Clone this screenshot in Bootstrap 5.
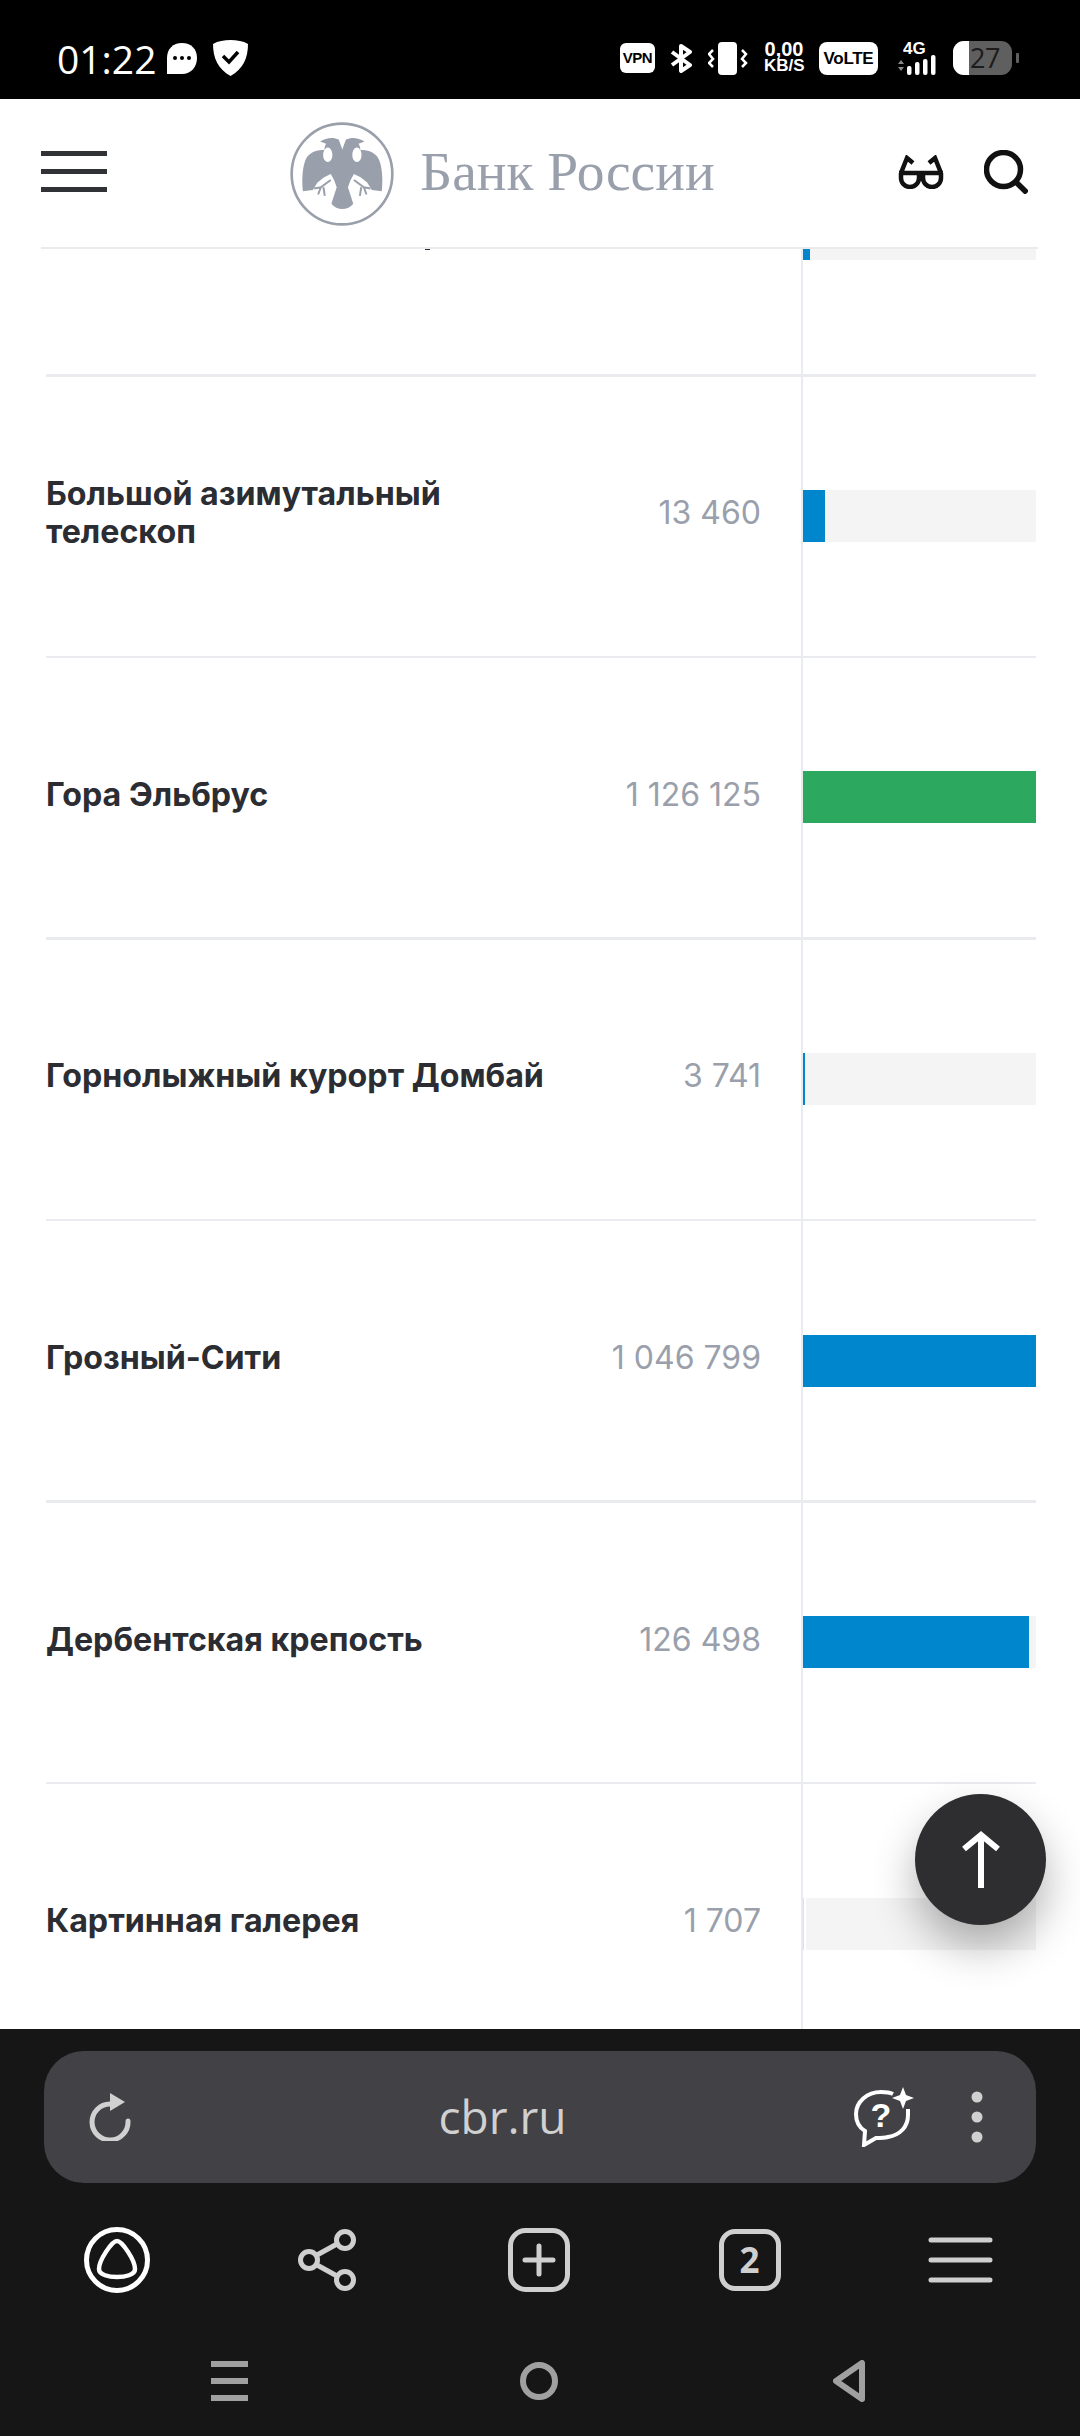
<!DOCTYPE html>
<html lang="ru">
<head>
  <meta charset="UTF-8" />
  <meta name="viewport" content="width=device-width, initial-scale=1.0"/>
  <title>Банк России</title>
  <link href="https://cdn.jsdelivr.net/npm/bootstrap@5.3.2/dist/css/bootstrap.min.css" rel="stylesheet" />
  <style>
    html, body { height: 2436px; overflow: hidden; background: #fff; }
    body { width: 1080px; font-family: Inter, "Liberation Sans", sans-serif; }

    .phone-status { height: 99px; padding: 17px 61px 0 57px; background: #000; color: #fff; }
    .phone-time { font: 400 39px/1 "Open Sans", sans-serif; margin-right: 11px; }
    .phone-icons { gap: 15px; }
    .pill-vpn, .pill-volte { background: #fff; color: #000; font-family: "Liberation Sans", sans-serif; font-weight: 700; border-radius: 6px; text-align: center; }
    .pill-vpn { width: 35px; height: 30px; font-size: 15px; line-height: 30px; letter-spacing: -.5px; }
    .pill-volte { width: 59px; height: 33px; font-size: 17px; line-height: 33px; border-radius: 8px; letter-spacing: -.3px; }
    .net-speed { width: 40px; font: 700 20px/15px "Liberation Sans", sans-serif; text-align: center; white-space: nowrap; }
    .net-speed span { display: block; font-size: 17px; line-height: 18px; }
    .signal-4g { position: relative; width: 41px; height: 33px; margin: 0 2px; }
    .signal-4g b { position: absolute; left: 8px; top: -2px; font: 700 17px/1 "Liberation Sans", sans-serif; }
    .batt { position: relative; width: 59px; height: 34px; border-radius: 11px; background: #5f5f5f; color: #1c1c1c; font: 400 27px/34px "Open Sans", sans-serif; padding-left: 17px; letter-spacing: -.5px; }
    .batt::before { content: ""; position: absolute; left: 0; top: 0; bottom: 0; width: 16px; background: #fff; border-radius: 11px 0 0 11px; }
    .batt-cap { width: 3px; height: 10px; background: #5f5f5f; border-radius: 1px; margin-left: -11px; }

    .page-view { height: 1930px; }
    .site-head { height: 150px; z-index: 5; padding: 0 52px 5px 41px; }
    .site-head::after { content: ""; position: absolute; left: 41px; right: 42px; bottom: 0; height: 2px; background: #e9ebee; }
    .burger-top { width: 66px; }
    .burger-top i { display: block; height: 5px; margin-bottom: 13px; background: #303236; }
    .burger-top i:last-child { margin-bottom: 0; }
    .brand-logo { margin-top: 4px; }
    .brand-name { font: 400 55.5px/1 "Liberation Serif", serif; color: #9aa0ab; margin-left: 26px; white-space: nowrap; }
    .head-tools { gap: 40px; }

    .stat-list { margin: -5.6px 44px 0 46px; }
    .stat-row { height: 281.6px; position: relative; }
    .stat-row::after { content: ""; position: absolute; left: 0; right: 0; bottom: -1.5px; height: 2.5px; background: #e9ebee; }
    .stat-name { width: 650px; padding-bottom: 5px; font-size: 32.2px; line-height: 38px; font-weight: 700; color: #2b2d33; }
    .stat-num { width: 65px; flex-grow: 1; padding-right: 40px; padding-bottom: 5px; font-size: 32px; color: #9aa0ab; white-space: nowrap; }
    .stat-bar { width: 235px; flex: none; border-left: 2px solid #e8ebef; }
    .stat-bar .progress { height: 52px; width: 100%; border-radius: 0; background: #f4f4f4; }
    .bar-blue { background: #0086cd; }
    .bar-green { background: #2ca85f; }
    .bar-faint { background: #cfe6f3; border-right: 2px solid #fff; }
    .peek { position: absolute; left: 379px; top: 155px; width: 5px; height: 2px; background: #2b2d33; }

    .go-top { right: 34px; top: 1695px; width: 131px; height: 131px; z-index: 6; background: #2e2e30; box-shadow: 0 22px 44px rgba(0,0,0,.3); }

    .browser-bar { height: 407px; background: #161616; padding: 22px 44px 0; }
    .url-box { height: 132px; border-radius: 40px; background: #424146; padding: 0 53px 0 45px; }
    .url-text { font: 400 46px/1 "Open Sans", sans-serif; color: #d0d0d0; margin: -3px 0 0 20px; }
    .help-gap { margin-right: 57px; }
    .tool-row { margin: 45px -31px 0 -33px; height: 64px; }
    .tool-cell { width: 211px; }
    .tab-count { width: 62px; height: 62px; border: 5px solid #cfcfcf; border-radius: 16px; color: #cfcfcf; font: 700 35px/52px "Open Sans", sans-serif; text-align: center; }
    .sys-row { margin: 68px 30px 0; height: 42px; }
    .sys-cell { width: 310px; }
  </style>
</head>
<body class="d-flex flex-column">

  <div class="phone-status d-flex justify-content-between align-items-center flex-shrink-0">
    <div class="d-flex align-items-center">
      <span class="phone-time">01:22</span>
      <svg width="30" height="31" viewBox="0 0 30 31" class="me-3"><path d="M15 0C6 0 0 6 0 15V31H15C24 31 30 24 30 15S24 0 15 0Z" fill="#fff"/><circle cx="8" cy="15" r="2" fill="#000"/><circle cx="15" cy="15" r="2" fill="#000"/><circle cx="22" cy="15" r="2" fill="#000"/></svg>
      <svg width="35" height="36" viewBox="0 0 35 36"><path d="M17.500 0C24 0 30 1 35 4C35 18 30 29 17.500 36C5 29 0 18 0 4C5 1 11 0 17.500 0Z" fill="#fff"/><path d="M10 16L16 22L25 12" fill="none" stroke="#000" stroke-width="3.500"/></svg>
    </div>
    <div class="phone-icons d-flex align-items-center">
      <div class="pill-vpn">VPN</div>
      <svg width="23" height="29" viewBox="0 0 23 29"><path d="M2 8L20 21L11 27V2L20 8L2 21" fill="none" stroke="#fff" stroke-width="4" stroke-linejoin="round"/></svg>
      <svg width="41" height="33" viewBox="0 0 41 33"><rect x="10" width="19" height="33" rx="4" fill="#fff"/><path d="M5 8L1 12L5 17L1 21L5 25M34 8L38 12L34 17L38 21L34 25" fill="none" stroke="#fff" stroke-width="2.500"/></svg>
      <div class="net-speed">0,00<span>KB/S</span></div>
      <div class="pill-volte">VoLTE</div>
      <div class="signal-4g">
        <b>4G</b>
        <svg width="41" height="33" viewBox="0 0 41 33"><path d="M3 22L6 18L9 22ZM3 25L6 29L9 25Z" fill="#8a8a8a"/><rect x="12" y="24" width="4.500" height="9" rx="2" fill="#fff"/><rect x="20" y="20" width="4.500" height="13" rx="2" fill="#fff"/><rect x="28" y="17" width="4.500" height="16" rx="2" fill="#fff"/><rect x="36" y="13" width="4.500" height="20" rx="2" fill="#fff"/></svg>
      </div>
      <div class="batt">27</div>
      <div class="batt-cap"></div>
    </div>
  </div>

  <div class="page-view position-relative overflow-hidden flex-shrink-0">
    <header class="site-head position-absolute top-0 start-0 end-0 bg-white d-flex justify-content-between align-items-center">
      <div class="burger-top"><i></i><i></i><i></i></div>
      <div class="d-flex align-items-center">
        <svg class="brand-logo" width="104" height="104" viewBox="67 65 314 314">
          <circle cx="224" cy="222" r="152" fill="none" stroke="#9aa0ab" stroke-width="8"/>
          <g id="eagle-half" fill="#9aa0ab">
            <path d="M226 150L214 118C198 110 176 112 158 124L176 131C166 146 170 170 190 184L188 150C150 146 122 156 112 184C103 212 103 248 106 274L136 270L150 248L170 232L190 222L200 240L208 262L192 312C200 322 212 328 226 328Z"/>
            <path d="M190 240L160 262L140 266M160 262L152 284M168 262L172 288" fill="none" stroke="#9aa0ab" stroke-width="6"/>
          </g>
          <use href="#eagle-half" transform="matrix(-1 0 0 1 450 0)"/>
          <ellipse cx="181" cy="164" rx="14" ry="22" fill="#fff"/>
          <ellipse cx="269" cy="164" rx="14" ry="22" fill="#fff"/>
        </svg>
        <span class="brand-name">Банк России</span>
      </div>
      <div class="head-tools d-flex align-items-center">
        <svg width="46" height="34" viewBox="0 0 46 34" fill="none" stroke="#111" stroke-width="4.500"><path d="M1 18H45M3 18V23a9 9 0 0 0 18 0V18M25 18V23a9 9 0 0 0 18 0V18M3 18L9 3L15 8M43 18L37 3L31 8"/></svg>
        <svg width="44" height="44" viewBox="0 0 44 44" fill="none" stroke="#111" stroke-width="5.500"><circle cx="19.500" cy="19.500" r="17"/><path d="M31 31L43 43"/></svg>
      </div>
    </header>

    <div class="stat-list">
      <div class="stat-row d-flex align-items-stretch">
        <span class="peek"></span>
        <div class="stat-name d-flex align-items-center"></div>
        <div class="stat-num d-flex align-items-center justify-content-end"></div>
        <div class="stat-bar d-flex align-items-center"><div class="progress"><div class="progress-bar bar-blue" style="width:3%"></div></div></div>
      </div>
      <div class="stat-row d-flex align-items-stretch">
        <div class="stat-name d-flex align-items-center"><span>Большой азимутальный<br>телескоп</span></div>
        <div class="stat-num d-flex align-items-center justify-content-end">13 460</div>
        <div class="stat-bar d-flex align-items-center"><div class="progress"><div class="progress-bar bar-blue" style="width:9.500%"></div></div></div>
      </div>
      <div class="stat-row d-flex align-items-stretch">
        <div class="stat-name d-flex align-items-center">Гора Эльбрус</div>
        <div class="stat-num d-flex align-items-center justify-content-end">1 126 125</div>
        <div class="stat-bar d-flex align-items-center"><div class="progress"><div class="progress-bar bar-green" style="width:100%"></div></div></div>
      </div>
      <div class="stat-row d-flex align-items-stretch">
        <div class="stat-name d-flex align-items-center">Горнолыжный курорт Домбай</div>
        <div class="stat-num d-flex align-items-center justify-content-end">3 741</div>
        <div class="stat-bar d-flex align-items-center"><div class="progress"><div class="progress-bar bar-blue" style="width:1%"></div></div></div>
      </div>
      <div class="stat-row d-flex align-items-stretch">
        <div class="stat-name d-flex align-items-center">Грозный-Сити</div>
        <div class="stat-num d-flex align-items-center justify-content-end">1 046 799</div>
        <div class="stat-bar d-flex align-items-center"><div class="progress"><div class="progress-bar bar-blue" style="width:100%"></div></div></div>
      </div>
      <div class="stat-row d-flex align-items-stretch">
        <div class="stat-name d-flex align-items-center">Дербентская крепость</div>
        <div class="stat-num d-flex align-items-center justify-content-end">126 498</div>
        <div class="stat-bar d-flex align-items-center"><div class="progress"><div class="progress-bar bar-blue" style="width:97%"></div></div></div>
      </div>
      <div class="stat-row d-flex align-items-stretch">
        <div class="stat-name d-flex align-items-center">Картинная галерея</div>
        <div class="stat-num d-flex align-items-center justify-content-end">1 707</div>
        <div class="stat-bar d-flex align-items-center"><div class="progress"><div class="progress-bar bar-faint" style="width:1.500%"></div></div></div>
      </div>
      <div class="stat-row d-flex align-items-stretch">
        <div class="stat-name"></div>
        <div class="stat-num"></div>
        <div class="stat-bar"></div>
      </div>
    </div>

    <div class="go-top position-absolute rounded-circle d-flex align-items-center justify-content-center">
      <svg width="38" height="58" viewBox="0 0 38 58" fill="none" stroke="#fff" stroke-width="6"><path d="M19 57V4M2 18L19 4L36 18"/></svg>
    </div>
  </div>

  <div class="browser-bar flex-shrink-0">
    <div class="url-box d-flex align-items-center justify-content-between">
      <svg width="42" height="48" viewBox="0 0 42 48" fill="none"><path d="M21 11A18 18 0 1 0 39 28" stroke="#d0d0d0" stroke-width="5" stroke-linecap="round"/><path d="M21 0L36 9L21 18Z" fill="#d0d0d0"/></svg>
      <span class="url-text">cbr.ru</span>
      <div class="d-flex align-items-center">
        <svg width="60" height="60" viewBox="0 0 60 60" fill="none" class="help-gap">
          <path d="M39 7C35 5 31 5 27 5C13 5 2 15 2 27C2 35 6 41 11 44L10 58L22 51C26 51 30 51 34 50C46 48 54 40 54 28V22" stroke="#fff" stroke-width="4"/>
          <path d="M49 0L52 8L60 11L52 14L49 22L46 14L38 11L46 8Z" fill="#fff"/>
          <text x="27" y="40" text-anchor="middle" fill="#fff" font-family="Liberation Sans" font-weight="700" font-size="34">?</text>
        </svg>
        <svg width="12" height="52" viewBox="0 0 12 52" fill="#d0d0d0"><circle cx="6" cy="6" r="5.500"/><circle cx="6" cy="26" r="5.500"/><circle cx="6" cy="46" r="5.500"/></svg>
      </div>
    </div>

    <div class="tool-row d-flex align-items-center">
      <div class="tool-cell d-flex justify-content-center">
        <svg width="66" height="66" viewBox="0 0 66 66" fill="none" stroke="#fff" stroke-width="5"><circle cx="33" cy="33" r="30.500"/><path d="M33 14C38 14 51 33 51 42C51 48 41 50 33 50C25 50 15 48 15 42C15 33 28 14 33 14Z" stroke-width="4.500"/></svg>
      </div>
      <div class="tool-cell d-flex justify-content-center">
        <svg width="60" height="62" viewBox="0 0 60 62" fill="none" stroke="#cfcfcf" stroke-width="5"><circle cx="11" cy="31" r="8.500"/><circle cx="47" cy="11" r="8.500"/><circle cx="47" cy="51" r="8.500"/><path d="M19 26L39 15M19 36L39 47"/></svg>
      </div>
      <div class="tool-cell d-flex justify-content-center">
        <svg width="62" height="64" viewBox="0 0 62 64" fill="none" stroke="#cfcfcf" stroke-width="5"><rect x="2.500" y="2.500" width="57" height="59" rx="15"/><path d="M17 32H45M31 18V46" stroke-linecap="round"/></svg>
      </div>
      <div class="tool-cell d-flex justify-content-center"><div class="tab-count">2</div></div>
      <div class="tool-cell d-flex justify-content-center">
        <svg width="65" height="46" viewBox="0 0 65 46" fill="none" stroke="#cfcfcf" stroke-width="5" stroke-linecap="round"><path d="M3 3H62M3 23H62M3 43H62"/></svg>
      </div>
    </div>

    <div class="sys-row d-flex align-items-center">
      <div class="sys-cell d-flex justify-content-center">
        <svg width="37" height="40" viewBox="0 0 37 40" fill="none" stroke="#a0a0a0" stroke-width="6" stroke-linejoin="round"><path d="M1 3H36M1 20H36M1 37H36" stroke-linecap="round"/></svg>
      </div>
      <div class="sys-cell d-flex justify-content-center">
        <svg width="38" height="38" viewBox="0 0 38 38" fill="none" stroke="#a0a0a0" stroke-width="6"><circle cx="19" cy="19" r="16"/></svg>
      </div>
      <div class="sys-cell d-flex justify-content-center">
        <svg width="32" height="42" viewBox="0 0 32 42" fill="none" stroke="#a0a0a0" stroke-width="6" stroke-linejoin="round"><path d="M29 3V39L3 21Z"/></svg>
      </div>
    </div>
  </div>

  <script src="https://cdn.jsdelivr.net/npm/bootstrap@5.3.2/dist/js/bootstrap.bundle.min.js"></script>
</body>
</html>
